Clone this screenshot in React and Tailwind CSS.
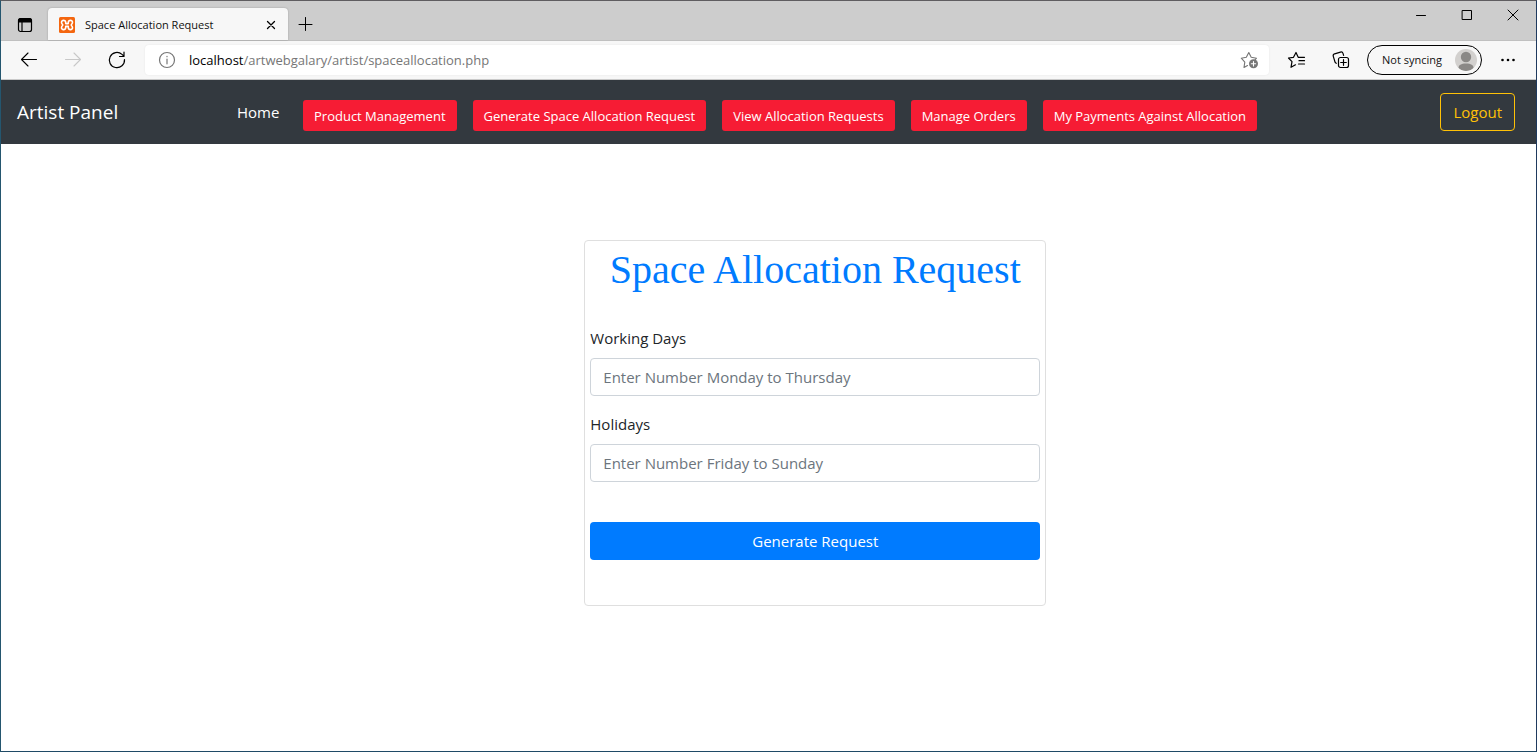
import React from "react";

const navLinks = [
  "Product Management",
  "Generate Space Allocation Request",
  "View Allocation Requests",
  "Manage Orders",
  "My Payments Against Allocation",
];

function Line({ size = 20, children, className = "", width = 1.1 }) {
  return (
    <svg
      width={size}
      height={size}
      viewBox={`0 0 ${size} ${size}`}
      fill="none"
      stroke="currentColor"
      strokeWidth={width}
      strokeLinecap="round"
      strokeLinejoin="round"
      className={className}
      aria-hidden="true"
    >
      {children}
    </svg>
  );
}

function TabStrip() {
  return (
    <div className="flex h-10 items-end border-b border-[#c0c0c0] bg-[#cdcdcd] pl-3.5">
      <button type="button" aria-label="Tab actions" className="mb-[5px] flex h-5 w-5 items-center justify-center">
        <Line size={20} width={1.2}>
          <rect x="3.5" y="3.5" width="13" height="13" rx="2" />
          <path d="M3.6 5.6a2 2 0 0 1 2-2h8.8a2 2 0 0 1 2 2V7H3.6z" fill="currentColor" />
          <path d="M7 7v9.4" />
        </Line>
      </button>
      <div className="ml-[13px] flex h-8 w-60 items-center rounded-t bg-[#f7f7f7] pl-[11px] pr-[9px] pt-0.5 shadow-[0_0_2px_rgba(0,0,0,0.25)]">
        <svg width="16" height="16" viewBox="0 0 16 16" className="shrink-0" aria-hidden="true">
          <rect width="16" height="16" rx="1.5" fill="#f4660f" />
          <path
            d="M6.700 5.400C6.700 3.700 5.400 3.300 4.300 3.400C2.700 3.600 2.300 4.800 2.600 5.900C2.800 6.700 3.400 7.200 3.800 8C3.400 8.800 2.800 9.300 2.600 10.100C2.300 11.200 2.700 12.400 4.300 12.600C5.600 12.700 6.500 12.200 6.700 10.600V9.400H9.300V10.600C9.500 12.200 10.400 12.700 11.700 12.600C13.300 12.400 13.700 11.200 13.400 10.100C13.200 9.300 12.600 8.800 12.200 8C12.600 7.200 13.200 6.700 13.400 5.900C13.700 4.800 13.300 3.600 11.700 3.400C10.600 3.300 9.300 3.700 9.300 5.400V6.600H6.700Z"
            fill="none"
            stroke="#fff"
            strokeWidth="1.6"
            strokeLinejoin="round"
          />
        </svg>
        <span className="ml-2.5 flex-1 whitespace-nowrap text-[11px] leading-4 text-[#111]">
          Space Allocation Request
        </span>
        <button type="button" aria-label="Close tab" className="flex h-4 w-4 items-center justify-center text-black">
          <Line size={16} width={1.3}>
            <path d="M4.500 4.500l7 7M11.500 4.500l-7 7" />
          </Line>
        </button>
      </div>
      <button type="button" aria-label="New tab" className="mb-2 ml-[9px] flex h-4 w-4 items-center justify-center">
        <Line size={16} width={1}>
          <path d="M8.500 1.500v13M2 8.500h13" />
        </Line>
      </button>
      <div className="ml-auto flex self-start">
        <button type="button" aria-label="Minimize" className="flex h-7 w-[46px] items-center justify-center">
          <Line size={12} width={1}><path d="M1.500 6.500h9" /></Line>
        </button>
        <button type="button" aria-label="Maximize" className="flex h-7 w-[46px] items-center justify-center">
          <Line size={12} width={1}><rect x="1.500" y="1.500" width="9" height="9" /></Line>
        </button>
        <button type="button" aria-label="Close" className="flex h-7 w-[46px] items-center justify-center">
          <Line size={12} width={1}><path d="M1 1l10 10M11 1L1 11" /></Line>
        </button>
      </div>
    </div>
  );
}

function Toolbar() {
  return (
    <div className="flex h-[39px] items-center border-b border-[#c9c9c9] bg-[#f7f7f7] pl-[18px] pr-[18px]">
      <button type="button" aria-label="Back" className="h-5 w-5">
        <Line><path d="M2.500 9.500h15M9 3l-6.500 6.500L9 16" /></Line>
      </button>
      <button type="button" aria-label="Forward" className="ml-6 h-5 w-5 text-[#c8c8c8]">
        <Line><path d="M2.500 9.500h15M11 3l6.500 6.500L11 16" /></Line>
      </button>
      <button type="button" aria-label="Refresh" className="ml-6 h-5 w-5">
        <Line width={1.200}>
          <path d="M17.500 9.500A7.600 7.600 0 1 1 15 4.400L17 6.200M17 2v4.500h-4.500" />
        </Line>
      </button>
      <div className="ml-[18px] flex h-[30px] flex-1 items-center rounded bg-white pl-3 pr-2.5 shadow-[0_0_2px_rgba(0,0,0,0.08)]">
        <Line size={20} className="shrink-0 text-[#767676]" width={1.200}>
          <circle cx="10" cy="10" r="7.500" />
          <path d="M10 9v4.800M10 6.300v.4" />
        </Line>
        <span className="ml-3 flex-1 whitespace-nowrap text-[13px] leading-5 text-[#767676]">
          <span className="text-black">localhost</span>/artwebgalary/artist/spaceallocation.php
        </span>
        <button type="button" aria-label="Add to favorites" className="h-5 w-5 text-[#767676]">
          <Line>
            <path d="M8.500 15.600L5 17.500l.8-5.400L2.300 8.200l5-.9L9.800 2.500l2.400 4.800 5.300.9-1.300 1.300" />
            <circle cx="14.500" cy="13.800" r="4.500" fill="currentColor" stroke="none" />
            <path d="M14.500 11.600v4.400M12.300 13.800h4.400" stroke="#fff" />
          </Line>
        </button>
      </div>
      <button type="button" aria-label="Favorites" className="ml-[18px] h-5 w-5">
        <Line width={1.200}>
          <path d="M8.500 14.800L4 17.300l1-5.600L1.500 8l5-.7L9 2.500l2.200 4.800h6.300M12 10.700h5.500M11.500 14h6" />
        </Line>
      </button>
      <button type="button" aria-label="Collections" className="ml-6 h-5 w-5">
        <Line width={1.200}>
          <rect x="7.500" y="7.500" width="10" height="10" rx="2" />
          <path d="M12.500 9.700v5.600M9.700 12.500h5.600M5.300 13.300a2 2 0 0 1-1.300-1.300L2.300 6.300a2 2 0 0 1 1.300-2.500l5.900-1.700a2 2 0 0 1 2.500 1.300l.6 2" />
        </Line>
      </button>
      <button
        type="button"
        className="ml-4 flex h-[30px] w-[115px] items-center justify-between rounded-full border border-black bg-[#f7f7f7] pl-3.5 pr-1 text-[11px] leading-4 text-[#111]"
      >
        <span className="whitespace-nowrap">Not syncing</span>
        <svg width="22" height="22" viewBox="0 0 22 22" aria-hidden="true">
          <clipPath id="avatar"><circle cx="11" cy="11" r="11" /></clipPath>
          <g clipPath="url(#avatar)">
            <rect width="22" height="22" fill="#d2d0ce" />
            <circle cx="11" cy="8" r="5.200" fill="#8a8886" />
            <path d="M3.500 19c0-3 2.500-4.500 7.500-4.500s7.500 1.500 7.500 4.500c-2 2-4.500 3-7.500 3s-5.500-1-7.500-3z" fill="#8a8886" />
          </g>
        </svg>
      </button>
      <button type="button" aria-label="Settings and more" className="ml-4 h-5 w-5">
        <svg width="20" height="20" viewBox="0 0 20 20" fill="currentColor" aria-hidden="true">
          <circle cx="4.500" cy="10" r="1.300" />
          <circle cx="10" cy="10" r="1.300" />
          <circle cx="15.500" cy="10" r="1.300" />
        </svg>
      </button>
    </div>
  );
}

function Navbar() {
  return (
    <nav className="flex h-16 items-center bg-[#33393f] pl-4 pr-[21px] text-white">
      <a href="#brand" className="w-[220px] shrink-0 whitespace-nowrap text-[19px] leading-[30px]">
        Artist Panel
      </a>
      <ul className="flex flex-1 items-center gap-4">
        <li className="w-[50px]">
          <a href="#home" className="text-[15px] leading-6">Home</a>
        </li>
        {navLinks.map((label) => (
          <li key={label} className="mt-1.5">
            <a
              href="#section"
              className="flex h-[31px] items-center whitespace-nowrap rounded-[3px] bg-[#f61c34] px-[11px] pt-px text-[13px] leading-5"
            >
              {label}
            </a>
          </li>
        ))}
      </ul>
      <button
        type="button"
        className="h-[38px] rounded border border-[#ffc107] px-3 text-[15px] leading-6 text-[#ffc107]"
      >
        Logout
      </button>
    </nav>
  );
}

function Field({ id, label, placeholder }) {
  return (
    <div className="mb-4">
      <label htmlFor={id} className="mb-2 block text-[15px] leading-6 text-[#212529]">
        {label}
      </label>
      <input
        id={id}
        type="text"
        placeholder={placeholder}
        className="block h-[38px] w-full rounded border border-[#ced4da] bg-white px-3 text-[15px] leading-6 text-[#495057] placeholder:text-[#6c757d]"
      />
    </div>
  );
}

export default function App() {
  return (
    <div className="flex min-h-screen flex-col border border-t-[#5f5d60] border-r-[#1f3a5f] border-b-[#1f4a66] border-l-[#24566f] bg-white font-['Open_Sans',sans-serif] text-black">
      <TabStrip />
      <Toolbar />
      <Navbar />
      <main className="flex-1 pt-24">
        <form className="ml-[38%] w-[462px] rounded border border-[#dfdfdf] px-[5px] pb-[45px] pt-[5px]">
          <h1 className="mb-8 text-center font-['Liberation_Serif',serif] text-[40px] leading-[48px] text-[#007bff]">
            Space Allocation Request
          </h1>
          <Field id="working-days" label="Working Days" placeholder="Enter Number Monday to Thursday" />
          <Field id="holidays" label="Holidays" placeholder="Enter Number Friday to Sunday" />
          <button
            type="submit"
            className="mt-6 h-[38px] w-full rounded bg-[#007bff] text-[15px] leading-6 text-white"
          >
            Generate Request
          </button>
        </form>
      </main>
    </div>
  );
}
